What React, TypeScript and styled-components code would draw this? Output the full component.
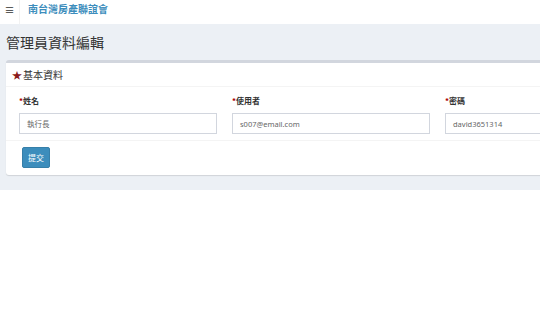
import styled, { createGlobalStyle } from "styled-components";

const Global = createGlobalStyle`
  html, body {
    margin: 0;
    padding: 0;
    background: #fff;
    overflow: hidden;
    font-family: "Noto Sans", "Noto Sans CJK TC", sans-serif;
  }
`;

const TopBar = styled.div`
  height: 24px;
  display: flex;
  align-items: stretch;
  background: #fff;
`;
const Burger = styled.div`
  width: 20px;
  display: flex;
  align-items: center;
  justify-content: center;
  font-size: 10px;
  color: #333;
  border-right: 1px solid #f2f2f2;
  padding-bottom: 6px;
  box-sizing: border-box;
`;
const Brand = styled.div`
  display: flex;
  align-items: center;
  padding-left: 8px;
  padding-bottom: 7px;
  font-size: 10px;
  font-weight: 700;
  color: #3c8dbc;
  font-family: "Noto Sans CJK TC", sans-serif;
`;
const Content = styled.div`
  background: #ecf0f5;
  padding: 8px 0 15px 6px;
  width: 660px;
`;
const PageTitle = styled.h1`
  margin: 0 0 8px;
  font-size: 14px;
  font-weight: 400;
  color: #333;
  line-height: 20px;
  font-family: "Noto Sans CJK TC", sans-serif;
`;
const Box = styled.div`
  background: #fff;
  border-top: 3px solid #d2d6de;
  border-radius: 3px;
  box-shadow: 0 1px 1px rgba(0, 0, 0, 0.12);
`;
const BoxHeader = styled.div`
  display: flex;
  align-items: center;
  height: 23px;
  padding: 0 6px;
  border-bottom: 1px solid #f4f4f4;
  font-size: 10px;
  color: #333;
  font-family: "Noto Sans CJK TC", sans-serif;
`;
const Star = styled.span`
  color: #8b1a1a;
  margin-right: 1px;
`;
const BoxBody = styled.div`
  display: grid;
  grid-template-columns: repeat(3, 198px);
  column-gap: 15px;
  padding: 9px 13px 6px;
  border-bottom: 1px solid #f4f4f4;
`;
const Field = styled.div`
  display: flex;
  flex-direction: column;
`;
const Label = styled.label`
  font-size: 8px;
  font-weight: 700;
  color: #333;
  line-height: 10px;
  margin-bottom: 7px;
  font-family: "Noto Sans CJK TC", sans-serif;
`;
const Req = styled.span`
  color: #a00;
`;
const Input = styled.div`
  height: 21px;
  box-sizing: border-box;
  border: 1px solid #d2d6de;
  display: flex;
  align-items: center;
  padding: 0 7px;
  font-size: 7.5px;
  color: #666;
  font-family: "Noto Sans", "Noto Sans CJK TC", sans-serif;
`;
const BoxFooter = styled.div`
  padding: 6px 16px 7px;
`;
const Button = styled.button`
  display: block;
  width: 28px;
  height: 21px;
  background: #3c8dbc;
  border: 1px solid #367fa9;
  border-radius: 2px;
  color: #fff;
  font-size: 8px;
  padding: 0;
  font-family: "Noto Sans CJK TC", sans-serif;
`;

const fields = [
  { label: "姓名", value: "執行長" },
  { label: "使用者", value: "s007@email.com" },
  { label: "密碼", value: "david3651314" },
];

export default function App() {
  return (
    <>
      <Global />
      <TopBar>
        <Burger>≡</Burger>
        <Brand>南台灣房產聯誼會</Brand>
      </TopBar>
      <Content>
        <PageTitle>管理員資料編輯</PageTitle>
        <Box>
          <BoxHeader>
            <Star>★</Star>基本資料
          </BoxHeader>
          <BoxBody>
            {fields.map((f) => (
              <Field key={f.label}>
                <Label>
                  <Req>*</Req>
                  {f.label}
                </Label>
                <Input>{f.value}</Input>
              </Field>
            ))}
          </BoxBody>
          <BoxFooter>
            <Button>提交</Button>
          </BoxFooter>
        </Box>
      </Content>
    </>
  );
}
